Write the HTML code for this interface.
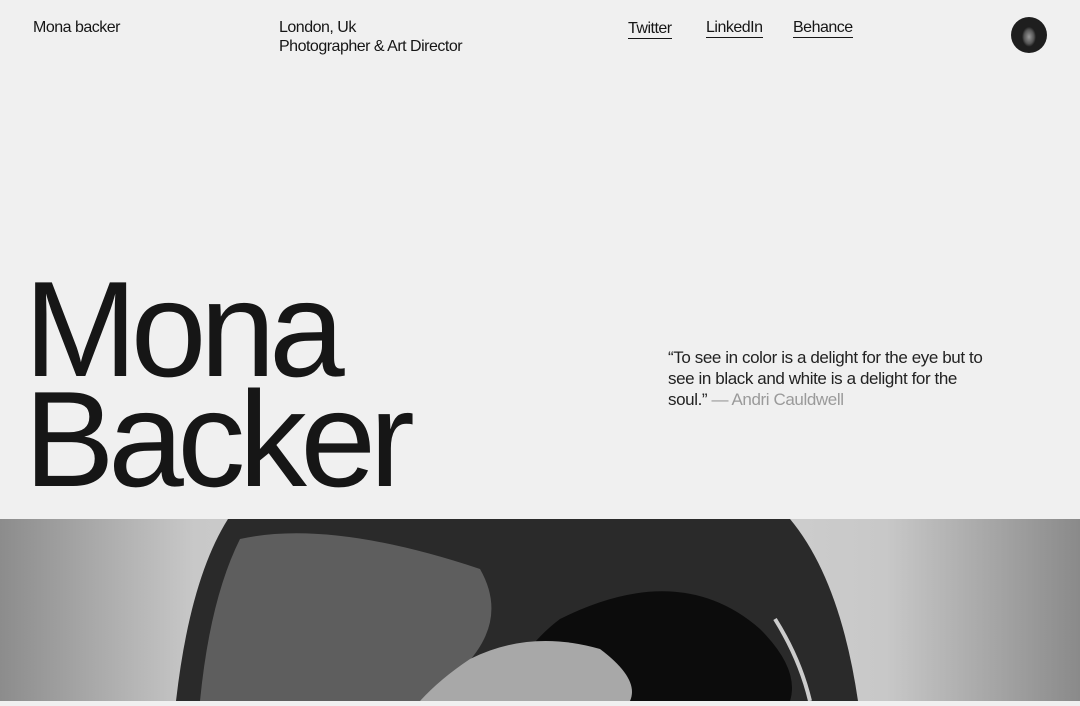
<!DOCTYPE html>
<html><head><meta charset="utf-8"><style>
*{margin:0;padding:0;box-sizing:border-box}
body{width:1080px;height:701px;overflow:hidden;background:#f0f0f0;font-family:"Liberation Sans",sans-serif;color:#161616;position:relative}
.t{position:absolute;font-size:16px;letter-spacing:-0.5px;line-height:19px}
a{color:#161616;text-decoration:none;border-bottom:1px solid #161616;padding-bottom:1px}
.big{position:absolute;left:24px;font-size:136px;letter-spacing:-6.5px;line-height:110px}
.q{position:absolute;left:668px;top:347px;width:330px;font-size:17px;line-height:21px;letter-spacing:-0.4px;color:#222}
.img{position:absolute;left:0;top:519px;width:1080px;height:182px;background:linear-gradient(90deg,#8c8c8c 0%,#c8c8c8 18%,#d8d8d8 50%,#c8c8c8 82%,#8a8a8a 100%)}
</style></head><body>
<div class="t" style="left:33px;top:18px">Mona backer</div>
<div class="t" style="left:279px;top:18px">London, Uk<br>Photographer &amp; Art Director</div>
<div class="t" style="left:628px;top:19px"><a>Twitter</a></div>
<div class="t" style="left:706px;top:18px"><a>LinkedIn</a></div>
<div class="t" style="left:793px;top:18px"><a>Behance</a></div>
<div style="position:absolute;left:1011px;top:17px;width:36px;height:36px;border-radius:50%;background:radial-gradient(ellipse 7px 10px at 50% 55%,#9a9a9a,#555 70%,#1e1e1e 100%)"></div>
<div class="big" style="top:274px">Mona</div>
<div class="big" style="top:384px">Backer</div>
<div class="q">“To see in color is a delight for the eye but to see in black and white is a delight for the soul.” <span style="color:#9a9a9a">— Andri Cauldwell</span></div>
<div class="img">
<svg width="1080" height="182" viewBox="0 0 1080 182">
<path d="M228 0 L790 0 Q840 60 858 182 L176 182 Q190 60 228 0Z" fill="#2a2a2a"/>
<path d="M240 20 Q330 0 480 50 Q520 120 420 182 L200 182 Q210 80 240 20Z" fill="#5e5e5e"/>
<path d="M560 100 Q680 40 760 110 Q800 150 790 182 L500 182 Q520 130 560 100Z" fill="#0c0c0c"/>
<path d="M470 140 Q530 110 600 130 Q640 160 630 182 L420 182 Q440 160 470 140Z" fill="#a8a8a8"/>
<path d="M775 100 Q800 140 810 182" stroke="#ccc" stroke-width="4" fill="none"/>
</svg>
</div>
</body></html>
